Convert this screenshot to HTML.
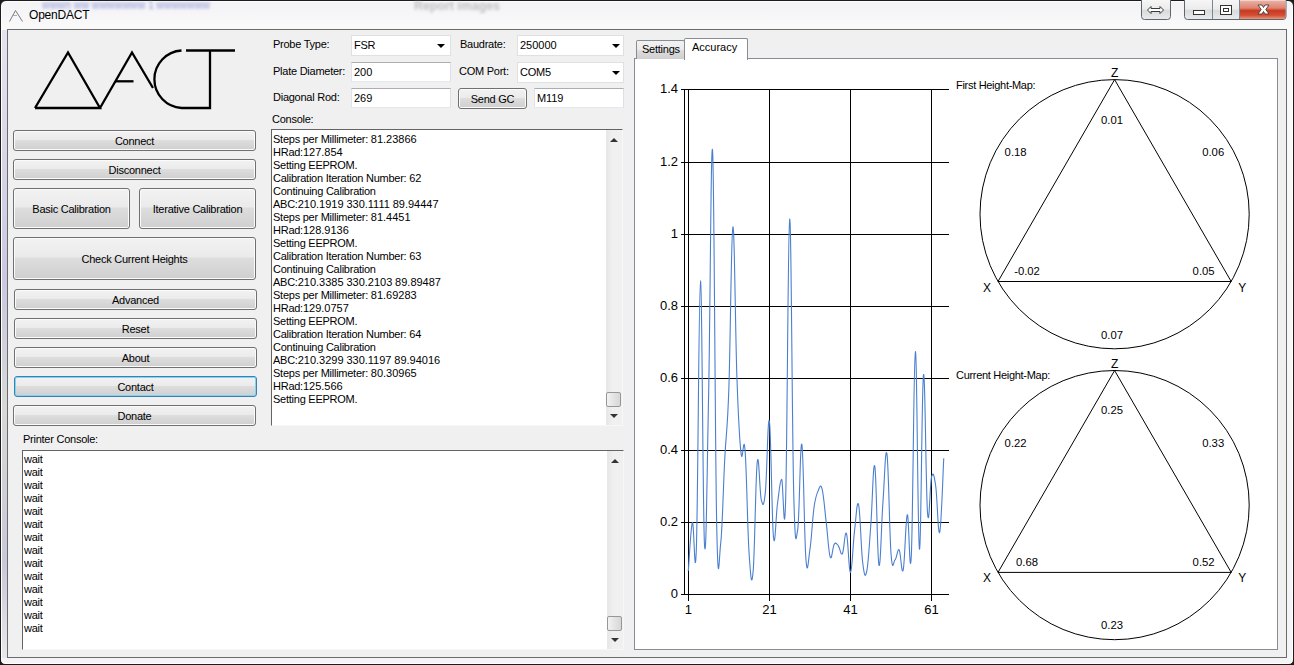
<!DOCTYPE html>
<html><head><meta charset="utf-8"><style>
*{box-sizing:border-box;margin:0;padding:0}
html,body{width:1294px;height:665px;overflow:hidden;background:#1a1a1a}
body{position:relative;font-family:"Liberation Sans", sans-serif;font-size:11px;color:#000}
.abs{position:absolute}
#frame{position:absolute;left:0;top:0;width:1294px;height:665px;border:1px solid #1c1c1c;border-radius:6px 6px 5px 5px;
 background:linear-gradient(to bottom,#f3f3f7 0px,#fafafa 30px,#f4f4f6 100%);box-shadow:inset 0 0 0 1px #fff}
#client{position:absolute;left:7px;top:29px;width:1280px;height:629px;background:#f0f0f0;border:1px solid #6b6b6b}
.btn{position:absolute;border:1px solid #707070;border-radius:3px;text-align:center;white-space:nowrap;
 background:linear-gradient(to bottom,#f2f2f2 0%,#ebebeb 45%,#dddddd 50%,#cfcfcf 100%);box-shadow:inset 0 0 0 1px #fbfbfb;font-size:11px;color:#000;letter-spacing:-0.25px}
.btnf{position:absolute;border:1px solid #3c7fb1;border-radius:3px;text-align:center;white-space:nowrap;
 background:linear-gradient(to bottom,#f2f2f2 0%,#ebebeb 45%,#dddddd 50%,#cfcfcf 100%);box-shadow:inset 0 0 0 1px #7fd6f4;font-size:11px;color:#000;letter-spacing:-0.25px}
.lbl{position:absolute;white-space:nowrap;font-size:11px;line-height:13px;letter-spacing:-0.25px}
.tb{position:absolute;background:#fff;border:1px solid #abadb3;border-top-color:#abadb3;border-left-color:#e2e3ea;border-right-color:#dbdfe6;border-bottom-color:#e3e9ef;white-space:nowrap;font-size:11px;line-height:19px;padding-left:2px;letter-spacing:-0.25px}
.cb{position:absolute;background:#fff;border:1px solid #e0e0e0;white-space:nowrap;font-size:11px;line-height:18px;padding-left:2px;letter-spacing:-0.25px}
.arr{position:absolute;width:0;height:0;border-left:4px solid transparent;border-right:4px solid transparent;border-top:4px solid #000}
.con{position:absolute;background:#fff;border-top:1px solid #646464;border-left:1px solid #646464;border-right:1px solid #f7f7f7;border-bottom:1px solid #f7f7f7;overflow:hidden}
.con .ln{position:absolute;left:1px;white-space:nowrap;font-size:11px;line-height:13px;letter-spacing:-0.25px}
.sb{position:absolute;width:16px;background:linear-gradient(to right,#e6e6e6,#f0f0f0 40%,#f0f0f0)}
.thumb{position:absolute;left:0px;width:15px;border:1px solid #979797;border-radius:2px;background:linear-gradient(to right,#f2f2f2,#e4e4e4 50%,#d7d7d7)}
</style></head><body>
<div id="frame"></div>
<svg class="abs" style="left:0;top:0" width="1294" height="30">
<defs><filter id="bl"><feGaussianBlur stdDeviation="1.6"/></filter></defs>
<g filter="url(#bl)" opacity="0.6">
<text x="42" y="9" font-family="Liberation Sans" font-size="13" font-weight="bold" fill="#7c86c8" textLength="168" lengthAdjust="spacingAndGlyphs">wwwn ww wwwwwww 1 wwwwwww</text>
<text x="414" y="10" font-family="Liberation Sans" font-size="12" font-weight="bold" fill="#9a9a9a" textLength="86" lengthAdjust="spacingAndGlyphs">Report images</text>
</g>
<polyline points="9.5,21.5 15.5,10.5 22.5,21.5" fill="none" stroke="#7a7a7a" stroke-width="1"/>
<line x1="13" y1="15.5" x2="17" y2="15.5" stroke="#9a9a9a" stroke-width="0.8"/>
</svg>
<div class="lbl" style="left:29px;top:7px;font-size:12px;line-height:16px;color:#000;letter-spacing:-0.2px">OpenDACT</div>
<svg class="abs" style="left:1130px;top:0" width="164" height="30">
<defs>
<linearGradient id="cg" x1="0" y1="0" x2="0" y2="1"><stop offset="0" stop-color="#f6f6f6"/><stop offset="0.45" stop-color="#ececec"/><stop offset="0.55" stop-color="#d9dadc"/><stop offset="1" stop-color="#eaebec"/></linearGradient>
<linearGradient id="rg" x1="0" y1="0" x2="0" y2="1"><stop offset="0" stop-color="#eab1a5"/><stop offset="0.4" stop-color="#df8573"/><stop offset="0.55" stop-color="#c9391f"/><stop offset="0.8" stop-color="#d44e36"/><stop offset="1" stop-color="#e9977f"/></linearGradient>
</defs>
<path d="M11.5 0 V16.5 Q11.5 19.5 14.5 19.5 H37.5 Q40.5 19.5 40.5 16.5 V0" fill="url(#cg)" stroke="#5e6670" stroke-width="1"/>
<path d="M54.5 0 V16.5 Q54.5 19.5 57.5 19.5 H153 Q156 19.5 156 16.5 V0" fill="url(#cg)" stroke="#5e6670" stroke-width="1"/>
<path d="M109.5 0.5 V19 H153 Q155.5 19 155.5 16.5 V0.5 Z" fill="url(#rg)"/>
<line x1="82.5" y1="0" x2="82.5" y2="19" stroke="#7d8794" stroke-width="1"/>
<line x1="109.5" y1="0" x2="109.5" y2="19" stroke="#7d8794" stroke-width="1"/>
<path d="M17.5 10 L21 6.5 V8.5 H30 V6.5 L33.5 10 L30 13.5 V11.5 H21 V13.5 Z" fill="#fff" stroke="#3a3a3a" stroke-width="1" stroke-linejoin="round"/>
<rect x="63.5" y="10.5" width="11" height="4" fill="#fff" stroke="#333" stroke-width="1"/>
<rect x="90.5" y="5.5" width="11" height="9" fill="#fff" stroke="#333" stroke-width="1"/>
<rect x="93.5" y="8.5" width="5" height="3" fill="none" stroke="#333" stroke-width="1"/>
<path d="M128 5 H132 L133.5 7.5 L135 5 H139 L135.8 9.5 L139 14 H135 L133.5 11.5 L132 14 H128 L131.2 9.5 Z" fill="#fff" stroke="#4a3a36" stroke-width="0.9" stroke-linejoin="round"/>
</svg>
<div class="abs" style="left:2px;top:30px;width:5px;height:628px;background:linear-gradient(to bottom,#e4e4f0,#c9c8e0 40%,#d6d9d6 60%,#c8c8d8 85%,#e8e8ec)"></div>
<div id="client"></div>
<svg class="abs" style="left:0;top:0" width="260" height="125">
<g fill="none" stroke="#000" stroke-width="2.3" stroke-linejoin="miter">
<polyline points="35,108 68,52.5 100,108 35,108"/>
<polyline points="100,108 132,52.5 153,88"/>
<line x1="115" y1="81.3" x2="133.5" y2="81.3"/>
<path d="M181.5 50.5 A28.8 28.8 0 0 0 181.5 108 L210 108 L210 50.5"/>
<line x1="186" y1="50.5" x2="235" y2="50.5"/>
</g></svg>
<div class="btn" style="left:13px;top:130px;width:243px;height:21px;line-height:20px">Connect</div>
<div class="btn" style="left:13px;top:159px;width:243px;height:21px;line-height:20px">Disconnect</div>
<div class="btn" style="left:13px;top:188px;width:117px;height:41px;line-height:40px">Basic Calibration</div>
<div class="btn" style="left:139px;top:188px;width:117px;height:41px;line-height:40px">Iterative Calibration</div>
<div class="btn" style="left:13px;top:237px;width:243px;height:43px;line-height:42px">Check Current Heights</div>
<div class="btn" style="left:14px;top:289px;width:243px;height:21px;line-height:20px">Advanced</div>
<div class="btn" style="left:14px;top:318px;width:243px;height:21px;line-height:20px">Reset</div>
<div class="btn" style="left:14px;top:347px;width:243px;height:21px;line-height:20px">About</div>
<div class="btnf" style="left:14px;top:376px;width:243px;height:21px;line-height:20px">Contact</div>
<div class="btn" style="left:13px;top:405px;width:243px;height:21px;line-height:20px">Donate</div>
<div class="lbl" style="left:23px;top:433px">Printer Console:</div>
<div class="lbl" style="left:273px;top:38px">Probe Type:</div>
<div class="lbl" style="left:273px;top:65px">Plate Diameter:</div>
<div class="lbl" style="left:273px;top:91px">Diagonal Rod:</div>
<div class="lbl" style="left:272px;top:113px">Console:</div>
<div class="lbl" style="left:460px;top:38px">Baudrate:</div>
<div class="lbl" style="left:459px;top:65px">COM Port:</div>
<div class="cb" style="left:351px;top:35px;width:100px;height:21px">FSR</div><div class="arr" style="left:437px;top:44px"></div>
<div class="cb" style="left:517px;top:35px;width:107px;height:21px"><span style="letter-spacing:0">250000</span></div><div class="arr" style="left:612px;top:44px"></div>
<div class="cb" style="left:517px;top:62px;width:107px;height:21px">COM5</div><div class="arr" style="left:612px;top:71px"></div>
<div class="tb" style="left:351px;top:62px;width:100px;height:20px"><span style="letter-spacing:0">200</span></div>
<div class="tb" style="left:351px;top:88px;width:100px;height:20px"><span style="letter-spacing:0">269</span></div>
<div class="tb" style="left:534px;top:88px;width:90px;height:20px">M<span style="letter-spacing:0">119</span></div>
<div class="btn" style="left:458px;top:88px;width:69px;height:21px;line-height:20px">Send GC</div>
<div class="con" style="left:271px;top:129px;width:352px;height:297px">
<div class="ln" style="top:3px">Steps per Millimeter: <span style="letter-spacing:0">81.23866</span></div>
<div class="ln" style="top:16px">HRad:<span style="letter-spacing:0">127.854</span></div>
<div class="ln" style="top:29px">Setting EEPROM<span style="letter-spacing:0">.</span></div>
<div class="ln" style="top:42px">Calibration Iteration Number: <span style="letter-spacing:0">62</span></div>
<div class="ln" style="top:55px">Continuing Calibration</div>
<div class="ln" style="top:68px">ABC:<span style="letter-spacing:0">210.1919</span> <span style="letter-spacing:0">330.1111</span> <span style="letter-spacing:0">89.94447</span></div>
<div class="ln" style="top:81px">Steps per Millimeter: <span style="letter-spacing:0">81.4451</span></div>
<div class="ln" style="top:94px">HRad:<span style="letter-spacing:0">128.9136</span></div>
<div class="ln" style="top:107px">Setting EEPROM<span style="letter-spacing:0">.</span></div>
<div class="ln" style="top:120px">Calibration Iteration Number: <span style="letter-spacing:0">63</span></div>
<div class="ln" style="top:133px">Continuing Calibration</div>
<div class="ln" style="top:146px">ABC:<span style="letter-spacing:0">210.3385</span> <span style="letter-spacing:0">330.2103</span> <span style="letter-spacing:0">89.89487</span></div>
<div class="ln" style="top:159px">Steps per Millimeter: <span style="letter-spacing:0">81.69283</span></div>
<div class="ln" style="top:172px">HRad:<span style="letter-spacing:0">129.0757</span></div>
<div class="ln" style="top:185px">Setting EEPROM<span style="letter-spacing:0">.</span></div>
<div class="ln" style="top:198px">Calibration Iteration Number: <span style="letter-spacing:0">64</span></div>
<div class="ln" style="top:211px">Continuing Calibration</div>
<div class="ln" style="top:224px">ABC:<span style="letter-spacing:0">210.3299</span> <span style="letter-spacing:0">330.1197</span> <span style="letter-spacing:0">89.94016</span></div>
<div class="ln" style="top:237px">Steps per Millimeter: <span style="letter-spacing:0">80.30965</span></div>
<div class="ln" style="top:250px">HRad:<span style="letter-spacing:0">125.566</span></div>
<div class="ln" style="top:263px">Setting EEPROM<span style="letter-spacing:0">.</span></div>
</div>
<div class="sb" style="left:606px;top:130px;height:295px"><div class="abs" style="left:4px;top:8px;width:0;height:0;border-left:4px solid transparent;border-right:4px solid transparent;border-bottom:4px solid #333"></div><div class="abs" style="left:4px;top:284px;width:0;height:0;border-left:4px solid transparent;border-right:4px solid transparent;border-top:4px solid #333"></div><div class="thumb" style="top:262px;height:15px"></div></div>
<div class="con" style="left:22px;top:450px;width:602px;height:200px">
<div class="ln" style="top:2px">wait</div>
<div class="ln" style="top:15px">wait</div>
<div class="ln" style="top:28px">wait</div>
<div class="ln" style="top:41px">wait</div>
<div class="ln" style="top:54px">wait</div>
<div class="ln" style="top:67px">wait</div>
<div class="ln" style="top:80px">wait</div>
<div class="ln" style="top:93px">wait</div>
<div class="ln" style="top:106px">wait</div>
<div class="ln" style="top:119px">wait</div>
<div class="ln" style="top:132px">wait</div>
<div class="ln" style="top:145px">wait</div>
<div class="ln" style="top:158px">wait</div>
<div class="ln" style="top:171px">wait</div>
</div>
<div class="sb" style="left:607px;top:451px;height:198px"><div class="abs" style="left:4px;top:8px;width:0;height:0;border-left:4px solid transparent;border-right:4px solid transparent;border-bottom:4px solid #333"></div><div class="abs" style="left:4px;top:187px;width:0;height:0;border-left:4px solid transparent;border-right:4px solid transparent;border-top:4px solid #333"></div><div class="thumb" style="top:165px;height:15px"></div></div>
<div class="abs" style="left:634px;top:58px;width:644px;height:592px;background:#fff;border:1px solid #898c95"></div>
<div class="abs" style="left:636px;top:40px;width:49px;height:19px;border:1px solid #898c95;border-bottom:none;border-radius:2px 2px 0 0;background:linear-gradient(to bottom,#f2f2f2,#ebebeb 50%,#dddddd 50%,#cfcfcf)"></div>
<div class="lbl" style="left:642px;top:43px">Settings</div>
<div class="abs" style="left:684px;top:38px;width:64px;height:22px;border:1px solid #898c95;border-bottom:none;border-radius:2px 2px 0 0;background:#fff"></div>
<div class="lbl" style="left:692px;top:41px;letter-spacing:0">Accuracy</div>
<svg class="abs" style="left:0;top:0" width="1294" height="665">
<g stroke="#000" stroke-width="1" shape-rendering="crispEdges">
<line x1="681" y1="594.5" x2="949" y2="594.5"/>
<line x1="681" y1="522.5" x2="949" y2="522.5"/>
<line x1="681" y1="450.5" x2="949" y2="450.5"/>
<line x1="681" y1="378.5" x2="949" y2="378.5"/>
<line x1="681" y1="306.5" x2="949" y2="306.5"/>
<line x1="681" y1="234.5" x2="949" y2="234.5"/>
<line x1="681" y1="162.5" x2="949" y2="162.5"/>
<line x1="681" y1="89.5" x2="949" y2="89.5"/>
<line x1="688.5" y1="89" x2="688.5" y2="601"/>
<line x1="769.5" y1="89" x2="769.5" y2="601"/>
<line x1="850.5" y1="89" x2="850.5" y2="601"/>
<line x1="931.5" y1="89" x2="931.5" y2="601"/>
<line x1="684.5" y1="89" x2="684.5" y2="595"/>
</g>
<path d="M688.30 571.03 C689.11 561.35 690.73 527.53 692.35 522.66 C693.98 517.80 694.79 595.05 696.41 546.70 C698.03 498.35 698.84 281.21 700.46 280.90 C702.09 280.60 702.90 521.89 704.52 545.19 C706.14 568.48 706.95 476.08 708.57 397.39 C710.20 318.69 711.01 126.31 712.63 151.70 C714.25 177.09 715.06 446.13 716.68 524.35 C718.31 602.58 719.12 556.03 720.74 542.81 C722.36 529.59 723.17 489.07 724.79 458.26 C726.42 427.44 727.23 435.00 728.85 388.74 C730.47 342.48 731.28 228.94 732.90 226.95 C734.53 224.96 735.34 333.58 736.96 378.79 C738.58 424.00 739.39 438.64 741.01 453.00 C742.64 467.35 743.45 430.33 745.07 450.54 C746.69 470.76 747.50 530.01 749.12 554.05 C750.75 578.09 751.56 589.10 753.18 570.74 C754.80 552.38 755.61 476.45 757.23 462.26 C758.86 448.07 759.67 493.74 761.29 499.78 C762.91 505.81 763.72 508.11 765.34 492.42 C766.97 476.74 767.78 412.49 769.40 421.35 C771.02 430.21 771.83 520.29 773.45 536.72 C775.08 553.14 775.89 514.98 777.51 503.49 C779.13 492.00 779.94 479.86 781.56 479.27 C783.19 478.68 784.00 552.60 785.62 500.53 C787.24 448.47 788.05 220.31 789.67 218.95 C791.30 217.59 792.11 431.75 793.73 493.72 C795.35 555.69 796.16 538.71 797.78 528.82 C799.41 518.94 800.22 438.32 801.84 444.31 C803.46 450.30 804.27 537.75 805.89 558.77 C807.52 579.80 808.33 559.66 809.95 549.44 C811.57 539.22 812.38 519.37 814.00 507.67 C815.63 495.97 816.44 494.66 818.06 490.95 C819.68 487.23 820.49 482.88 822.12 489.07 C823.74 495.26 824.55 508.32 826.17 521.90 C827.79 535.49 828.60 552.57 830.22 557.01 C831.85 561.45 832.66 546.34 834.28 544.10 C835.90 541.87 836.71 543.93 838.33 545.83 C839.96 547.74 840.77 556.08 842.39 553.62 C844.01 551.16 844.82 529.77 846.44 533.54 C848.07 537.31 848.88 573.04 850.50 572.47 C852.12 571.89 852.93 544.20 854.55 530.66 C856.18 517.12 856.99 498.46 858.61 504.78 C860.23 511.11 861.04 548.96 862.66 562.30 C864.29 575.65 865.10 578.84 866.72 571.49 C868.34 564.15 869.15 546.61 870.77 525.58 C872.40 504.55 873.21 458.53 874.83 466.37 C876.45 474.20 877.26 557.58 878.88 564.76 C880.51 571.93 881.32 524.35 882.94 502.26 C884.56 480.18 885.37 443.97 886.99 454.33 C888.62 464.69 889.43 532.95 891.05 554.05 C892.67 575.15 893.48 560.67 895.10 559.82 C896.73 558.97 897.54 547.80 899.16 549.80 C900.78 551.80 901.59 576.81 903.21 569.80 C904.84 562.79 905.65 517.69 907.27 514.77 C908.89 511.85 909.70 587.84 911.32 555.20 C912.95 522.57 913.76 352.79 915.38 351.58 C917.00 350.37 917.81 544.52 919.43 549.15 C921.06 553.78 921.87 381.98 923.49 374.75 C925.11 367.52 925.92 492.60 927.54 513.00 C929.17 533.40 929.98 482.24 931.60 476.75 C933.22 471.25 934.03 474.45 935.65 485.54 C937.28 496.63 938.09 537.65 939.71 532.18 C941.33 526.70 942.95 472.98 943.76 458.19" fill="none" stroke="#4a7fd0" stroke-width="1.1"/>
<text x="678" y="597.7" text-anchor="end" font-family="Liberation Sans" font-size="13" fill="#000">0</text>
<text x="678" y="525.7" text-anchor="end" font-family="Liberation Sans" font-size="13" fill="#000">0.2</text>
<text x="678" y="453.7" text-anchor="end" font-family="Liberation Sans" font-size="13" fill="#000">0.4</text>
<text x="678" y="381.7" text-anchor="end" font-family="Liberation Sans" font-size="13" fill="#000">0.6</text>
<text x="678" y="309.7" text-anchor="end" font-family="Liberation Sans" font-size="13" fill="#000">0.8</text>
<text x="678" y="237.7" text-anchor="end" font-family="Liberation Sans" font-size="13" fill="#000">1</text>
<text x="678" y="165.7" text-anchor="end" font-family="Liberation Sans" font-size="13" fill="#000">1.2</text>
<text x="678" y="92.7" text-anchor="end" font-family="Liberation Sans" font-size="13" fill="#000">1.4</text>
<text x="688.3" y="614" text-anchor="middle" font-family="Liberation Sans" font-size="13" fill="#000">1</text>
<text x="769.4" y="614" text-anchor="middle" font-family="Liberation Sans" font-size="13" fill="#000">21</text>
<text x="850.5" y="614" text-anchor="middle" font-family="Liberation Sans" font-size="13" fill="#000">41</text>
<text x="931.6" y="614" text-anchor="middle" font-family="Liberation Sans" font-size="13" fill="#000">61</text>
<circle cx="1114.6" cy="214.2" r="134.6" fill="none" stroke="#000" stroke-width="1"/><polygon points="1114.6,79.6 998.0,281.5 1231.2,281.5" fill="none" stroke="#000" stroke-width="1"/><text x="1114.6" y="76.6" text-anchor="middle" font-family="Liberation Sans" font-size="12">Z</text><text x="987.0" y="291.5" text-anchor="middle" font-family="Liberation Sans" font-size="12">X</text><text x="1242.2" y="291.5" text-anchor="middle" font-family="Liberation Sans" font-size="12">Y</text><text x="1112" y="123.5" text-anchor="middle" font-family="Liberation Sans" font-size="11.3">0.01</text><text x="1015.6" y="156.2" text-anchor="middle" font-family="Liberation Sans" font-size="11.3">0.18</text><text x="1213.2" y="156.2" text-anchor="middle" font-family="Liberation Sans" font-size="11.3">0.06</text><text x="1027" y="275.2" text-anchor="middle" font-family="Liberation Sans" font-size="11.3">-0.02</text><text x="1203.6" y="275.2" text-anchor="middle" font-family="Liberation Sans" font-size="11.3">0.05</text><text x="1112" y="338.5" text-anchor="middle" font-family="Liberation Sans" font-size="11.3">0.07</text><text x="956" y="88.5" font-family="Liberation Sans" font-size="11" letter-spacing="-0.3">First Height-Map:</text>
<circle cx="1114.6" cy="505.1" r="134.6" fill="none" stroke="#000" stroke-width="1"/><polygon points="1114.6,370.5 998.0,572.4 1231.2,572.4" fill="none" stroke="#000" stroke-width="1"/><text x="1114.6" y="367.5" text-anchor="middle" font-family="Liberation Sans" font-size="12">Z</text><text x="987.0" y="582.4" text-anchor="middle" font-family="Liberation Sans" font-size="12">X</text><text x="1242.2" y="582.4" text-anchor="middle" font-family="Liberation Sans" font-size="12">Y</text><text x="1112" y="414.4" text-anchor="middle" font-family="Liberation Sans" font-size="11.3">0.25</text><text x="1015.6" y="447.1" text-anchor="middle" font-family="Liberation Sans" font-size="11.3">0.22</text><text x="1213.2" y="447.1" text-anchor="middle" font-family="Liberation Sans" font-size="11.3">0.33</text><text x="1027" y="566.1" text-anchor="middle" font-family="Liberation Sans" font-size="11.3">0.68</text><text x="1203.6" y="566.1" text-anchor="middle" font-family="Liberation Sans" font-size="11.3">0.52</text><text x="1112" y="629.4" text-anchor="middle" font-family="Liberation Sans" font-size="11.3">0.23</text><text x="956" y="379.4" font-family="Liberation Sans" font-size="11" letter-spacing="-0.3">Current Height-Map:</text>
</svg>
</body></html>
